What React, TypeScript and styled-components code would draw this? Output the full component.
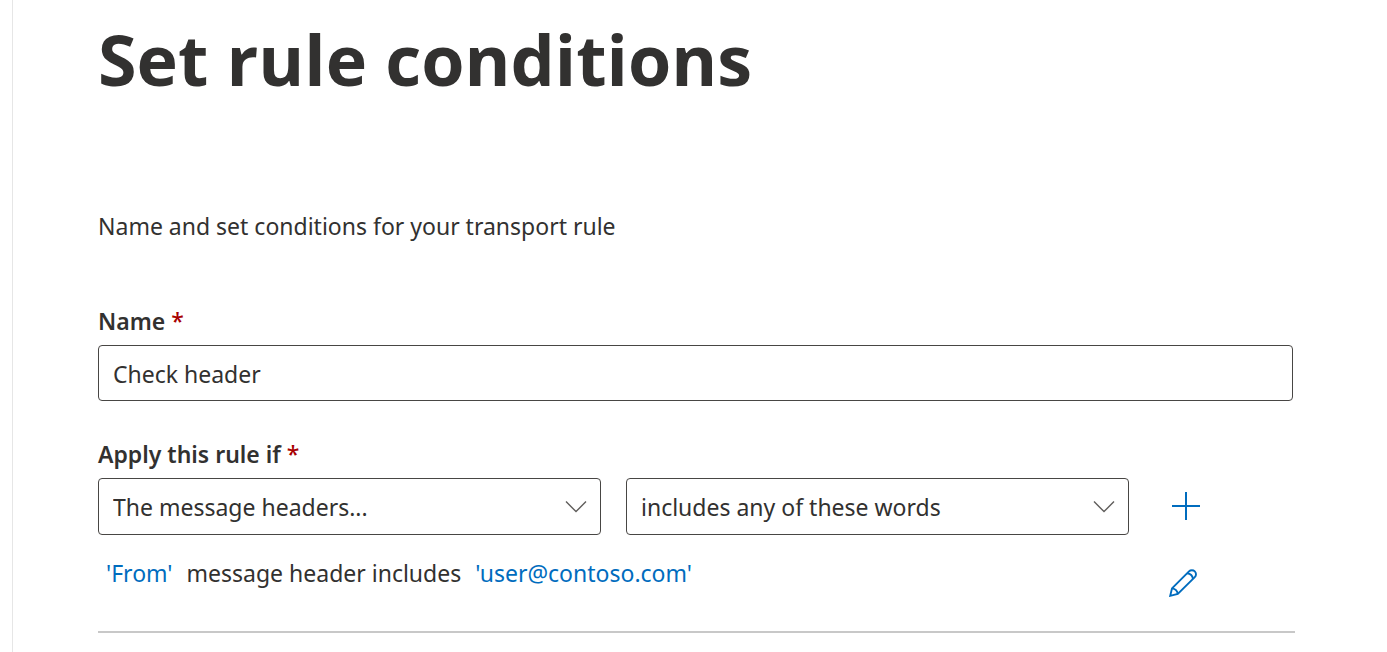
import React from 'react';
import styled, { createGlobalStyle } from 'styled-components';

const ink = '#323130';
const blue = '#006cbe';

const GlobalStyle = createGlobalStyle`
  *, *::before, *::after { box-sizing: border-box; }
  body {
    margin: 0;
    background: #fff;
    color: ${ink};
    font-family: 'Segoe UI', 'Noto Sans', 'Open Sans', sans-serif;
    font-size: 23px;
    line-height: 32px;
  }
  button, input, select { font: inherit; color: inherit; }
`;

const Panel = styled.main`
  min-height: 100vh;
  margin-left: 12px;
  padding: 11px 92px 19px 85px;
  border-left: 1px solid #e6e6e6;
`;

const Title = styled.h1`
  margin: 0;
  font-family: 'Segoe UI', 'Open Sans', sans-serif;
  font-size: 70px;
  line-height: 96px;
  font-weight: 700;
`;

const Description = styled.p`
  margin: 103px 0 0;
`;

const Field = styled.div<{ $gap: number }>`
  display: flex;
  flex-direction: column;
  gap: 8px;
  margin-top: ${({ $gap }) => $gap}px;
`;

const Label = styled.label`
  font-weight: 600;
`;

const Required = styled.span`
  color: #a80000;
  font-weight: 500;
`;

const TextInput = styled.input`
  height: 56px;
  margin-right: 2px;
  padding: 2px 14px 0;
  border: 1px solid #484644;
  border-radius: 4px;
  background: #fff;
`;

const ConditionRow = styled.div`
  display: flex;
  align-items: flex-start;
`;

const Dropdowns = styled.div`
  flex: 1;
  display: grid;
  grid-template-columns: 1fr 1fr;
  gap: 25px;
`;

const Dropdown = styled.div`
  display: grid;
  align-items: center;

  > * { grid-area: 1 / 1; }
  > svg {
    justify-self: end;
    margin-right: 14px;
    pointer-events: none;
  }
`;

const Select = styled.select`
  appearance: none;
  width: 100%;
  height: 57px;
  padding: 0 48px 0 14px;
  border: 1px solid #484644;
  border-radius: 4px;
  background: #fff;
`;

const Actions = styled.div<{ $left: number; $top: number }>`
  flex: none;
  width: 166px;
  padding: ${({ $top, $left }) => `${$top}px 0 0 ${$left}px`};
`;

const IconButton = styled.button`
  display: grid;
  place-items: center;
  width: 40px;
  height: 40px;
  padding: 0;
  border: 0;
  background: transparent;
  color: ${blue};
  cursor: pointer;
`;

const Summary = styled.div`
  display: flex;
  align-items: flex-start;
  margin-top: 22px;
  padding-bottom: 28px;
  border-bottom: 2px solid #c8c8c8;
`;

const SummaryText = styled.p`
  flex: 1;
  display: flex;
  gap: 14px;
  margin: 0;
  padding-left: 8px;
`;

const ValueLink = styled.a`
  color: ${blue};
  text-decoration: none;
`;

const Chevron = () => (
  <svg width="22" height="12" viewBox="0 0 22 12" fill="none" stroke="#605e5c" strokeWidth="1.4" aria-hidden="true">
    <path d="M1 .6l10 10L21 .6" />
  </svg>
);

const Plus = () => (
  <svg width="28" height="28" viewBox="0 0 28 28" fill="none" stroke="currentColor" strokeWidth="2" aria-hidden="true">
    <path d="M14 0v28M0 14h28" />
  </svg>
);

const Pencil = () => (
  <svg width="28" height="28" viewBox="0 0 28 28" fill="none" stroke="currentColor" strokeWidth="1.9" aria-hidden="true">
    <path d="M3 19.4L20 2.4A4 4 0 0 1 25.8 8.2L8.8 25L1.2 26.8Z" />
    <path d="M18.2 4.2C21.2 4.6 23.6 7 24 10M3 19.4C6 19.9 8.4 22 8.8 25" />
  </svg>
);

export default function App() {
  return (
    <>
      <GlobalStyle />
      <Panel>
        <Title>Set rule conditions</Title>
        <Description>Name and set conditions for your transport rule</Description>
        <Field $gap={63}>
          <Label htmlFor="name">
            Name <Required>*</Required>
          </Label>
          <TextInput id="name" type="text" defaultValue="Check header" required />
        </Field>
        <Field $gap={37}>
          <Label htmlFor="condition">
            Apply this rule if <Required>*</Required>
          </Label>
          <ConditionRow>
            <Dropdowns>
              <Dropdown>
                <Select id="condition" required>
                  <option>The message headers...</option>
                </Select>
                <Chevron />
              </Dropdown>
              <Dropdown>
                <Select aria-label="Header match">
                  <option>includes any of these words</option>
                </Select>
                <Chevron />
              </Dropdown>
            </Dropdowns>
            <Actions $left={37} $top={8}>
              <IconButton type="button" aria-label="Add condition">
                <Plus />
              </IconButton>
            </Actions>
          </ConditionRow>
        </Field>
        <Summary>
          <SummaryText>
            <ValueLink href="#header">'From'</ValueLink>
            <span>message header includes</span>
            <ValueLink href="#words">'user@contoso.com'</ValueLink>
          </SummaryText>
          <Actions $left={34} $top={6}>
            <IconButton type="button" aria-label="Edit condition">
              <Pencil />
            </IconButton>
          </Actions>
        </Summary>
      </Panel>
    </>
  );
}
